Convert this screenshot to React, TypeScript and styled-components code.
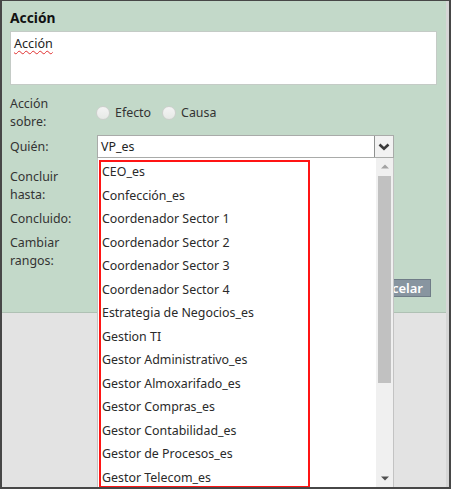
import * as React from 'react';
import styled, { createGlobalStyle } from 'styled-components';

const GlobalStyle = createGlobalStyle`
  html, body {
    margin: 0;
    padding: 0;
    background: #ffffff;
  }

  body {
    font-family: 'Noto Sans', 'Open Sans', sans-serif;
    font-size: 12.4px;
    color: #333333;
  }
`;

const Frame = styled.div`
  position: relative;
  box-sizing: border-box;
  width: 451px;
  height: 489px;
  border: 2px solid #474747;
  border-top-width: 1px;
  background-color: #e3e3e3;
  overflow: hidden;
  display: flex;
`;

const Page = styled.div`
  flex: 1;
  display: flex;
  flex-direction: column;
`;

const EdgeStrip = styled.div`
  width: 3px;
  background-color: #d6d6d6;
`;

const Panel = styled.div`
  box-sizing: border-box;
  height: 312px;
  padding: 8px 9px 0 8px;
  background-color: #c3d9c9;
  border-bottom: 1px solid #afc1b4;
`;

const Title = styled.h3`
  margin: 0 0 4px;
  font-size: 13.8px;
  line-height: 18px;
  font-weight: 700;
  color: #111111;
`;

const TextBox = styled.div`
  box-sizing: border-box;
  height: 54px;
  padding: 3px 3px;
  background-color: #ffffff;
  border: 1px solid #c4cbc6;
  font-size: 12.6px;
  line-height: 18px;
  color: #222222;
`;

const Misspelled = styled.span`
  text-decoration: underline wavy #e03030;
  text-decoration-thickness: 1px;
  text-underline-offset: 2px;
`;

const Row = styled.div<{ $gap: number }>`
  display: flex;
  align-items: center;
  margin-top: ${({ $gap }) => $gap}px;
`;

const Label = styled.div`
  width: 87px;
  flex: none;
  line-height: 18px;
  color: #333333;
`;

const RadioGroup = styled.div`
  display: flex;
  align-items: center;
  margin-left: -1px;
`;

const RadioDot = styled.span`
  box-sizing: border-box;
  width: 14px;
  height: 14px;
  border-radius: 50%;
  border: 1px solid #cdd0cd;
  background: linear-gradient(#f4f4f4, #e6e9e6);
  margin-right: 5px;
`;

const RadioText = styled.span`
  margin-right: 11px;
  line-height: 18px;
`;

const Select = styled.div`
  box-sizing: border-box;
  width: 297px;
  height: 23px;
  display: flex;
  background-color: #ffffff;
  border: 1px solid #a9aba9;
`;

const SelectValue = styled.div`
  flex: 1;
  padding-left: 3px;
  line-height: 21px;
  color: #222222;
`;

const SelectArrow = styled.div`
  width: 18px;
  display: flex;
  align-items: center;
  justify-content: center;
  background-color: #f2f2f2;
  border-left: 1px solid #8f9190;
`;

const ButtonBar = styled.div`
  display: flex;
  justify-content: flex-end;
  gap: 6px;
  margin-top: 9px;
  margin-right: 6px;
`;

const Button = styled.button`
  box-sizing: border-box;
  height: 18px;
  padding: 0 7px 0 5px;
  font-family: inherit;
  font-size: 13px;
  font-weight: 600;
  line-height: 16px;
  color: #ffffff;
  background-color: #8895a0;
  border: 1px solid #6f7c87;
`;

const Dropdown = styled.div`
  position: absolute;
  left: 95px;
  top: 157px;
  bottom: 0;
  width: 297px;
  box-sizing: border-box;
  display: flex;
  background-color: #ffffff;
  border-left: 1px solid #c3c3c3;
  border-right: 1px solid #c3c3c3;
`;

const OptionList = styled.ul`
  flex: 1;
  margin: 0;
  padding: 2px 0 0;
  list-style: none;
  overflow: hidden;
`;

const Option = styled.li`
  height: 23.5px;
  padding-left: 4px;
  line-height: 23.5px;
  color: #2a2a2a;
  white-space: nowrap;
`;

const ScrollBar = styled.div`
  width: 17px;
  display: flex;
  flex-direction: column;
  background-color: #f0f0f0;
`;

const ScrollButton = styled.div`
  height: 17px;
  display: flex;
  align-items: center;
  justify-content: center;
`;

const Track = styled.div`
  flex: 1;
  display: flex;
  justify-content: center;
`;

const Thumb = styled.div<{ $size: number }>`
  width: 13px;
  height: ${({ $size }) => $size}px;
  margin-top: 1px;
  background-color: #c1c1c1;
`;

const Highlight = styled.div`
  position: absolute;
  left: 97px;
  top: 159px;
  width: 211px;
  bottom: -1px;
  box-sizing: border-box;
  border: 2px solid #ff1414;
  pointer-events: none;
`;

const Chevron = () => (
  <svg width="12" height="8" viewBox="0 0 12 8">
    <path d="M1.5 1.5 L6 5.8 L10.5 1.5" fill="none" stroke="#3a3a3a" strokeWidth="2.6" />
  </svg>
);

const Triangle = ({ up, color }: { up?: boolean; color: string }) => (
  <svg width="8" height="5" viewBox="0 0 8 5">
    <path d={up ? 'M0 4.5 L4 0.5 L8 4.5 Z' : 'M0 0.5 L4 4.5 L8 0.5 Z'} fill={color} />
  </svg>
);

const roles = [
  'CEO_es',
  'Confección_es',
  'Coordenador Sector 1',
  'Coordenador Sector 2',
  'Coordenador Sector 3',
  'Coordenador Sector 4',
  'Estrategia de Negocios_es',
  'Gestion TI',
  'Gestor Administrativo_es',
  'Gestor Almoxarifado_es',
  'Gestor Compras_es',
  'Gestor Contabilidad_es',
  'Gestor de Procesos_es',
  'Gestor Telecom_es',
];

const App = (): React.ReactElement => (
  <>
    <GlobalStyle />
    <Frame>
      <Page>
        <Panel>
          <Title>Acción</Title>
          <TextBox>
            <Misspelled>Acción</Misspelled>
          </TextBox>

          <Row $gap={10}>
            <Label>
              Acción
              <br />
              sobre:
            </Label>
            <RadioGroup>
              <RadioDot />
              <RadioText>Efecto</RadioText>
              <RadioDot />
              <RadioText>Causa</RadioText>
            </RadioGroup>
          </Row>

          <Row $gap={4}>
            <Label>Quién:</Label>
            <Select>
              <SelectValue>VP_es</SelectValue>
              <SelectArrow>
                <Chevron />
              </SelectArrow>
            </Select>
          </Row>

          <Row $gap={10}>
            <Label>
              Concluir
              <br />
              hasta:
            </Label>
          </Row>

          <Row $gap={6}>
            <Label>Concluido:</Label>
          </Row>

          <Row $gap={6}>
            <Label>
              Cambiar
              <br />
              rangos:
            </Label>
          </Row>

          <ButtonBar>
            <Button>Aceptar</Button>
            <Button>Cancelar</Button>
          </ButtonBar>
        </Panel>
      </Page>
      <EdgeStrip />

      <Dropdown>
        <OptionList>
          {roles.map((role) => (
            <Option key={role}>{role}</Option>
          ))}
        </OptionList>
        <ScrollBar>
          <ScrollButton>
            <Triangle up color="#a3a3a3" />
          </ScrollButton>
          <Track>
            <Thumb $size={207} />
          </Track>
          <ScrollButton>
            <Triangle color="#505050" />
          </ScrollButton>
        </ScrollBar>
      </Dropdown>

      <Highlight />
    </Frame>
  </>
);

export default App;
